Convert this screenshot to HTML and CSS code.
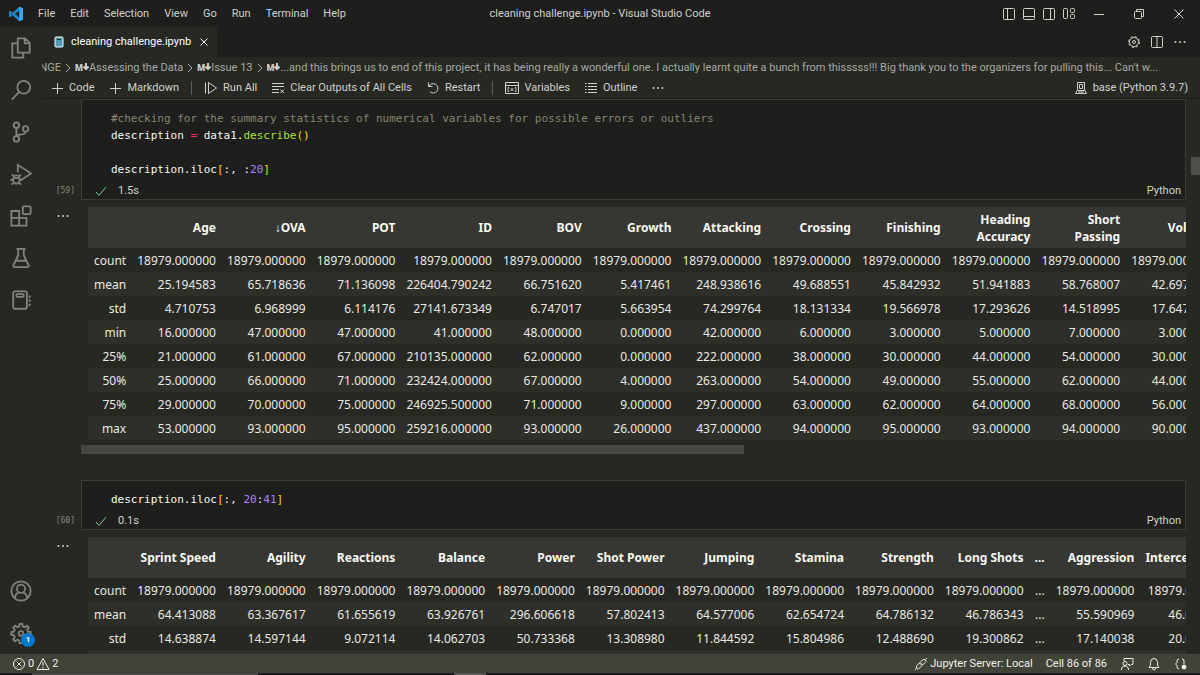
FILE: index.html
```html
<!DOCTYPE html>
<html lang="en">
<head>
  <meta charset="UTF-8">
  <meta name="viewport" content="width=device-width, initial-scale=1.0">
  <title>cleaning challenge.ipynb - Visual Studio Code</title>
  <link rel="stylesheet" href="styles.css">
</head>
<body>
  <header class="titlebar">
    <div class="titlebar-left">
      <svg class="logo" viewBox="0 0 16 16"><path d="M11.2.8 15 2.5v11l-3.8 1.7L4.6 9.2 2 11.2 1 10.6V5.4L2 4.8l2.600 2z" fill="#1f8ad2"/><path d="M11.2.8 15 2.5v11l-3.8 1.700z" fill="#3ba9f4"/><path d="M11.2 4.7v6.600L6.800 8z" fill="#1e1f1c"/><path d="M3 6.900v2.200L4.100 8z" fill="#1e1f1c"/></svg>
      <nav class="menu">
        <button>File</button>
        <button>Edit</button>
        <button>Selection</button>
        <button>View</button>
        <button>Go</button>
        <button>Run</button>
        <button>Terminal</button>
        <button>Help</button>
      </nav>
    </div>
    <div class="window-title">cleaning challenge.ipynb - Visual Studio Code</div>
    <div class="titlebar-right">
      <div class="layout-controls">
        <button aria-label="Toggle side bar"><svg class="icon" viewBox="0 0 14 14"><rect x="1.500" y="1.500" width="11" height="11" rx="1"/><path d="M5.500 1.500v11"/></svg></button>
        <button aria-label="Toggle panel"><svg class="icon" viewBox="0 0 14 14"><rect x="1.500" y="1.500" width="11" height="11" rx="1"/><path d="M1.500 9.500h11"/></svg></button>
        <button aria-label="Toggle secondary side bar"><svg class="icon" viewBox="0 0 14 14"><rect x="1.500" y="1.500" width="11" height="11" rx="1"/><path d="M8.500 1.500v11"/></svg></button>
        <button aria-label="Customize layout"><svg class="icon" viewBox="0 0 14 14"><rect x="1.500" y="1.500" width="4" height="10" rx="1"/><rect x="8.500" y="1.500" width="4" height="4" rx="1"/><rect x="8.500" y="7.500" width="4" height="4" rx="1"/></svg></button>
      </div>
      <div class="window-controls">
        <button aria-label="Minimize"><svg class="icon" viewBox="0 0 14 14"><path d="M2 7.500h10"/></svg></button>
        <button aria-label="Restore"><svg class="icon" viewBox="0 0 14 14"><rect x="2.500" y="4.500" width="7" height="7" rx="1"/><path d="M4.500 4.500v-2h7v7h-2"/></svg></button>
        <button aria-label="Close"><svg class="icon" viewBox="0 0 14 14"><path d="m2.500 2.500 9 9m0-9-9 9"/></svg></button>
      </div>
    </div>
  </header>

  <div class="workbench">
    <aside class="activitybar">
      <div class="activity-group">
        <button aria-label="Explorer"><svg class="icon-lg" viewBox="0 0 24 24"><path d="M8.500 1.500h8l5 5v10.500h-13zM16 1.500V7h5.500M8.500 7h-6v15.500h12V17"/></svg></button>
        <button aria-label="Search"><svg class="icon-lg" viewBox="0 0 24 24"><circle cx="15" cy="9" r="7"/><path d="m10 14-8 8.500"/></svg></button>
        <button aria-label="Source control"><svg class="icon-lg" viewBox="0 0 24 24"><circle cx="7" cy="4.500" r="3"/><circle cx="7" cy="19.500" r="3"/><circle cx="17" cy="8.500" r="3"/><path d="M7 7.500v9M17 11.500c0 3-4 3.500-7 3.500-2 0-3 1-3 1.500"/></svg></button>
        <button aria-label="Run and debug"><svg class="icon-lg" viewBox="0 0 24 24"><path d="M8.500 10V2L23 11.500 13 18"/><ellipse cx="7" cy="18" rx="3.500" ry="4.500"/><path d="M3.700 16.500h6.600M4.500 14.500 2 12.500M9.500 14.500l2.500-2M3.500 18.500H.5M10.500 18.500h3M4.500 21 2 23.500M9.500 21l2.500 2.500"/></svg></button>
        <button aria-label="Extensions"><svg class="icon-lg" viewBox="0 0 24 24"><path d="M1.500 6.500h8.500v7.500h8v8.500H1.500zM1.500 14H10v8.500"/><rect x="14" y="1.500" width="8.500" height="8.500" rx="1"/></svg></button>
        <button aria-label="Testing"><svg class="icon-lg" viewBox="0 0 24 24"><path d="M7 2h10M9 2v7L3.500 20.500q0 1.500 1.500 1.500h14q1.500 0 1.500-1.500L15 9V2M6.500 15h11"/></svg></button>
        <button aria-label="Notebook"><svg class="icon-lg" viewBox="0 0 24 24"><rect x="3.500" y="2.500" width="15" height="19" rx="2"/><rect x="7" y="5.500" width="8" height="3" rx="1"/><path d="M21.500 7v2.500M21.500 11.500V14M21.500 16v2.500"/></svg></button>
      </div>
      <div class="activity-group">
        <button aria-label="Accounts"><svg class="icon-lg" viewBox="0 0 24 24"><circle cx="12" cy="12" r="10.500"/><circle cx="12" cy="9.500" r="4.500"/><path d="M5.500 20c0-4 2.500-6 4.500-6.500M18.500 20c0-4-2.500-6-4.500-6.500"/></svg></button>
        <button class="manage" aria-label="Manage">
          <svg class="icon-lg" viewBox="0 0 24 24"><path d="M10.500 2h3l.5 3 2 .8 2.500-1.800 2 2-1.700 2.600.8 1.900 3 .5v3l-3 .5-.8 2 1.700 2.500-2 2-2.500-1.700-2 .8-.5 3h-3l-.5-3-2-.8-2.500 1.700-2-2 1.700-2.500-.8-2-3-.5v-3l3-.5.8-1.900L3.500 6l2-2L8 5.800l2-.8z"/><circle cx="12" cy="12.500" r="2.500"/></svg>
          <span class="badge">1</span>
        </button>
      </div>
    </aside>

    <main class="editor">
      <div class="tabs">
        <div class="tab">
          <svg class="file-icon" viewBox="0 0 12 12"><rect x="2" y="1" width="8" height="10" rx="1" fill="#519aba"/><path d="M4 3.500h4" stroke="#272822"/><path d="M10.500 2v2m0 1.500v2m0 1.500v1.500" stroke="#519aba"/></svg>
          <span>cleaning challenge.ipynb</span>
          <button aria-label="Close tab"><svg class="icon tab-close" viewBox="0 0 14 14"><path d="m3.500 3.500 7 7m0-7-7 7"/></svg></button>
        </div>
        <div class="tab-actions">
          <button aria-label="Notebook settings"><svg class="icon" viewBox="0 0 14 14"><circle cx="7" cy="7" r="4.500"/><circle cx="7" cy="7" r="1.500"/><circle cx="7" cy="7" r="5.500" stroke-dasharray="2.200 2.120"/></svg></button>
          <button aria-label="Split editor"><svg class="icon" viewBox="0 0 14 14"><rect x="1.500" y="1.500" width="11" height="11" rx="1"/><path d="M7 1.500v11"/></svg></button>
          <button aria-label="More actions"><svg class="icon dots" viewBox="0 0 14 14"><circle cx="2.500" cy="7" r="1"/><circle cx="7" cy="7" r="1"/><circle cx="11.500" cy="7" r="1"/></svg></button>
        </div>
      </div>

      <nav class="breadcrumbs">
        <a href="#" class="crumb-first">NGE</a>
        <svg class="chevron" viewBox="0 0 8 12"><path d="m2 2 4 4-4 4"/></svg>
        <a href="#"><span class="md">M<svg viewBox="0 0 6 8"><path d="M3 0v6M.5 3.500 3 6l2.500-2.500"/></svg></span>Assessing the Data</a>
        <svg class="chevron" viewBox="0 0 8 12"><path d="m2 2 4 4-4 4"/></svg>
        <a href="#"><span class="md">M<svg viewBox="0 0 6 8"><path d="M3 0v6M.5 3.500 3 6l2.500-2.500"/></svg></span>Issue 13</a>
        <svg class="chevron" viewBox="0 0 8 12"><path d="m2 2 4 4-4 4"/></svg>
        <a href="#" class="crumb-last"><span class="md">M<svg viewBox="0 0 6 8"><path d="M3 0v6M.5 3.500 3 6l2.500-2.500"/></svg></span>...and this brings us to end of this project, it has being really a wonderful one. I actually learnt quite a bunch from thisssss!!! Big thank you to the organizers for pulling this... Can't w...</a>
      </nav>

      <div class="toolbar">
        <button><svg class="icon" viewBox="0 0 14 14"><path d="M7.500 2v11M2 7.500h11"/></svg>Code</button>
        <button><svg class="icon" viewBox="0 0 14 14"><path d="M7.500 2v11M2 7.500h11"/></svg>Markdown</button>
        <span class="separator"></span>
        <button><svg class="icon" viewBox="0 0 14 14"><path d="M1.500 1.500v11M4.500 1.500v11l8-5.500z"/></svg>Run All</button>
        <button><svg class="icon" viewBox="0 0 14 14"><path d="M1 2.500h12M1 5.500h12M1 8.500h7M1 11.500h7M9.500 8.500l3.500 3.500m0-3.500-3.500 3.500"/></svg>Clear Outputs of All Cells</button>
        <button><svg class="icon" viewBox="0 0 14 14"><path d="M2.500 1.500v4h4M3 5.200a4.700 4.700 0 1 1 1 5.600"/></svg>Restart</button>
        <span class="separator"></span>
        <button><svg class="icon" viewBox="0 0 14 14"><path d="M.5 1.500h13v11H.5zM1 4.500h12M4 6.500H3v4h1M10 6.500h1v4h-1M5.500 7l3 3m0-3-3 3"/></svg>Variables</button>
        <button><svg class="icon" viewBox="0 0 14 14"><path d="M4 2.500h9M4 5.500h9M4 8.500h9M4 11.500h9M1 2.500h1.500M1 5.500h1.500M1 8.500h1.500M1 11.500h1.500"/></svg>Outline</button>
        <button aria-label="More"><svg class="icon dots" viewBox="0 0 14 14"><circle cx="2.500" cy="7" r="1"/><circle cx="7" cy="7" r="1"/><circle cx="11.500" cy="7" r="1"/></svg></button>
        <button class="kernel"><svg class="icon" viewBox="0 0 14 14"><path d="M3.500 1.500h7v8h-7zM5.500 3.500h3v4h-3zM3 9.500l-1.500 3h11l-1.500-3M4 11h6"/></svg>base (Python 3.9.7)</button>
      </div>

      <div class="notebook">
        <section class="cell">
          <div class="count">[59]</div>
          <div class="cell-box">
<pre class="code"><span class="comment">#checking for the summary statistics of numerical variables for possible errors or outliers</span>
description <span class="op">=</span> data1.<span class="fn">describe</span><span class="bracket">()</span>

description.iloc<span class="bracket">[</span>:, :<span class="num">20</span><span class="bracket">]</span></pre>
            <div class="cell-status">
              <svg class="check" viewBox="0 0 14 14"><path d="m2 8 3 3.500L12 3"/></svg>
              <span>1.5s</span>
              <button class="language">Python</button>
            </div>
          </div>
        </section>

        <section class="output">
          <button class="output-menu" aria-label="Output actions"><svg class="icon dots" viewBox="0 0 14 14"><circle cx="2.500" cy="7" r="1"/><circle cx="7" cy="7" r="1"/><circle cx="11.500" cy="7" r="1"/></svg></button>
          <div class="output-body">
            <table>
              <thead>
                <tr><th></th><th>Age</th><th>↓OVA</th><th>POT</th><th>ID</th><th>BOV</th><th>Growth</th><th>Attacking</th><th>Crossing</th><th>Finishing</th><th>Heading<br>Accuracy</th><th>Short<br>Passing</th><th>Volleys</th></tr>
              </thead>
              <tbody>
                <tr><th>count</th><td>18979.000000</td><td>18979.000000</td><td>18979.000000</td><td>18979.000000</td><td>18979.000000</td><td>18979.000000</td><td>18979.000000</td><td>18979.000000</td><td>18979.000000</td><td>18979.000000</td><td>18979.000000</td><td>18979.000000</td></tr>
                <tr><th>mean</th><td>25.194583</td><td>65.718636</td><td>71.136098</td><td>226404.790242</td><td>66.751620</td><td>5.417461</td><td>248.938616</td><td>49.688551</td><td>45.842932</td><td>51.941883</td><td>58.768007</td><td>42.697086</td></tr>
                <tr><th>std</th><td>4.710753</td><td>6.968999</td><td>6.114176</td><td>27141.673349</td><td>6.747017</td><td>5.663954</td><td>74.299764</td><td>18.131334</td><td>19.566978</td><td>17.293626</td><td>14.518995</td><td>17.647012</td></tr>
                <tr><th>min</th><td>16.000000</td><td>47.000000</td><td>47.000000</td><td>41.000000</td><td>48.000000</td><td>0.000000</td><td>42.000000</td><td>6.000000</td><td>3.000000</td><td>5.000000</td><td>7.000000</td><td>3.000000</td></tr>
                <tr><th>25%</th><td>21.000000</td><td>61.000000</td><td>67.000000</td><td>210135.000000</td><td>62.000000</td><td>0.000000</td><td>222.000000</td><td>38.000000</td><td>30.000000</td><td>44.000000</td><td>54.000000</td><td>30.000000</td></tr>
                <tr><th>50%</th><td>25.000000</td><td>66.000000</td><td>71.000000</td><td>232424.000000</td><td>67.000000</td><td>4.000000</td><td>263.000000</td><td>54.000000</td><td>49.000000</td><td>55.000000</td><td>62.000000</td><td>44.000000</td></tr>
                <tr><th>75%</th><td>29.000000</td><td>70.000000</td><td>75.000000</td><td>246925.500000</td><td>71.000000</td><td>9.000000</td><td>297.000000</td><td>63.000000</td><td>62.000000</td><td>64.000000</td><td>68.000000</td><td>56.000000</td></tr>
                <tr><th>max</th><td>53.000000</td><td>93.000000</td><td>95.000000</td><td>259216.000000</td><td>93.000000</td><td>26.000000</td><td>437.000000</td><td>94.000000</td><td>95.000000</td><td>93.000000</td><td>94.000000</td><td>90.000000</td></tr>
              </tbody>
            </table>
            <div class="scroll-track"><div class="scroll-thumb"></div></div>
          </div>
        </section>

        <section class="cell">
          <div class="count">[60]</div>
          <div class="cell-box">
<pre class="code">description.iloc<span class="bracket">[</span>:, <span class="num">20</span>:<span class="num">41</span><span class="bracket">]</span></pre>
            <div class="cell-status">
              <svg class="check" viewBox="0 0 14 14"><path d="m2 8 3 3.500L12 3"/></svg>
              <span>0.1s</span>
              <button class="language">Python</button>
            </div>
          </div>
        </section>

        <section class="output">
          <button class="output-menu" aria-label="Output actions"><svg class="icon dots" viewBox="0 0 14 14"><circle cx="2.500" cy="7" r="1"/><circle cx="7" cy="7" r="1"/><circle cx="11.500" cy="7" r="1"/></svg></button>
          <div class="output-body">
            <table>
              <thead>
                <tr><th></th><th>Sprint Speed</th><th>Agility</th><th>Reactions</th><th>Balance</th><th>Power</th><th>Shot Power</th><th>Jumping</th><th>Stamina</th><th>Strength</th><th>Long Shots</th><th>...</th><th>Aggression</th><th>Interceptions</th></tr>
              </thead>
              <tbody>
                <tr><th>count</th><td>18979.000000</td><td>18979.000000</td><td>18979.000000</td><td>18979.000000</td><td>18979.000000</td><td>18979.000000</td><td>18979.000000</td><td>18979.000000</td><td>18979.000000</td><td>18979.000000</td><td>...</td><td>18979.000000</td><td>18979.000000</td></tr>
                <tr><th>mean</th><td>64.413088</td><td>63.367617</td><td>61.655619</td><td>63.926761</td><td>296.606618</td><td>57.802413</td><td>64.577006</td><td>62.654724</td><td>64.786132</td><td>46.786343</td><td>...</td><td>55.590969</td><td>46.000000</td></tr>
                <tr><th>std</th><td>14.638874</td><td>14.597144</td><td>9.072114</td><td>14.062703</td><td>50.733368</td><td>13.308980</td><td>11.844592</td><td>15.804986</td><td>12.488690</td><td>19.300862</td><td>...</td><td>17.140038</td><td>20.000000</td></tr>
                <tr><th></th><td></td><td></td><td></td><td></td><td></td><td></td><td></td><td></td><td></td><td></td><td></td><td></td><td></td></tr>
              </tbody>
            </table>
          </div>
        </section>
        <div class="page-thumb"></div>
      </div>
    </main>
  </div>

  <footer class="statusbar">
    <button class="problems">
      <svg class="icon" viewBox="0 0 14 14"><circle cx="7" cy="7" r="5.500"/><path d="m4.500 4.500 5 5m0-5-5 5"/></svg>0
      <svg class="icon" viewBox="0 0 14 14"><path d="M7 1.500 13 12.500H1zM7 5v4M7 10v1.500"/></svg>2
    </button>
    <div class="status-right">
      <button><svg class="icon" viewBox="0 0 14 14"><path d="M6 5.500 8.500 3Q10 1.500 11.500 3T11 5.500L8.500 8zM5.500 6 3 8.500Q1.500 10 3 11.500T5.500 11L8 8.500zM11.500 2.500l1.500-1.500M1 13l1.500-1.500"/></svg>Jupyter Server: Local</button>
      <button>Cell 86 of 86</button>
      <button aria-label="Feedback"><svg class="icon" viewBox="0 0 14 14"><path d="M4 4V1.500h9v6h-2L9.500 9V7.500H8"/><circle cx="5" cy="6.500" r="2"/><path d="M1.500 13c0-3 1.500-4 3.500-4s3.500 1 3.500 4"/></svg></button>
      <button aria-label="Notifications"><svg class="icon" viewBox="0 0 14 14"><path d="M2 10.500 3.500 8V5.500q0-4 3.500-4t3.500 4V8l1.500 2.500zM5.500 11q0 2 1.500 2t1.500-2"/></svg></button>
      <button aria-label="Formatting"><svg class="icon" viewBox="0 0 14 14"><path d="M5 2Q3 2 3 4v1.500L1.500 7 3 8.500V10q0 2 2 2M8 2q2 0 2 2v3"/><circle cx="10" cy="10" r="2" fill="currentColor"/></svg></button>
    </div>
  </footer>
  <div class="taskbar"><span class="task-wide"></span><span class="task-small"></span></div>
</body>
</html>
```

FILE: styles.css
```css
* {
  box-sizing: border-box;
}

body {
  margin: 0;
  height: 100vh;
  display: flex;
  flex-direction: column;
  overflow: hidden;
  background: #272822;
  color: #d0d0ca;
  font-family: Roboto, "Noto Sans", sans-serif;
  font-size: 11px;
  line-height: 16px;
}

button {
  display: flex;
  align-items: center;
  padding: 0;
  border: 0;
  background: none;
  color: inherit;
  font: inherit;
  white-space: nowrap;
  cursor: pointer;
}

a {
  color: inherit;
  text-decoration: none;
}

svg {
  flex: none;
  fill: none;
  stroke: currentColor;
}

.icon {
  width: 14px;
  height: 14px;
}

.dots {
  fill: currentColor;
  stroke: none;
}

/* title bar */
.titlebar {
  flex: none;
  height: 27px;
  display: grid;
  grid-template-columns: 1fr auto 1fr;
  align-items: center;
  background: #1e1f1c;
}

.titlebar-left,
.menu {
  display: flex;
  align-items: center;
}

.titlebar-left {
  padding-left: 8px;
  gap: 14px;
}

.logo {
  width: 16px;
  height: 16px;
  stroke: none;
}

.menu {
  gap: 15px;
}

.titlebar-right {
  display: flex;
  justify-content: flex-end;
  align-items: center;
  gap: 16px;
  padding-right: 14px;
}

.layout-controls {
  display: flex;
  gap: 6px;
}

.window-controls {
  display: flex;
  gap: 26px;
}

/* activity bar */
.workbench {
  flex: 1;
  min-height: 0;
  display: flex;
}

.activitybar {
  flex: none;
  width: 42px;
  display: flex;
  flex-direction: column;
  justify-content: space-between;
  color: #80817a;
}

.activity-group button {
  width: 42px;
  height: 42px;
  justify-content: center;
}

.icon-lg {
  width: 22px;
  height: 22px;
  stroke-width: 2;
}

.manage {
  position: relative;
}

.badge {
  position: absolute;
  right: 7px;
  bottom: 7px;
  width: 14px;
  height: 14px;
  border-radius: 50%;
  background: #007acc;
  color: #fff;
  font-size: 8px;
  font-weight: bold;
  line-height: 14px;
  text-align: center;
}

/* editor */
.editor {
  flex: 1;
  min-width: 0;
  display: flex;
  flex-direction: column;
}

.tabs {
  flex: none;
  height: 30px;
  display: flex;
  justify-content: space-between;
  background: #1e1f1c;
}

.tab {
  display: flex;
  align-items: center;
  gap: 6px;
  padding: 0 6px 0 11px;
  background: #272822;
  color: #fff;
}

.file-icon {
  width: 12px;
  height: 12px;
}

.tab-actions {
  display: flex;
  align-items: center;
  gap: 9px;
  padding-right: 13px;
}

.breadcrumbs {
  flex: none;
  height: 21px;
  display: flex;
  align-items: center;
  gap: 3px;
  padding-right: 8px;
  color: #a8a9a2;
  white-space: nowrap;
}

.crumb-first {
  flex: none;
  width: 19px;
  display: flex;
  justify-content: flex-end;
  overflow: hidden;
}

.crumb-last {
  min-width: 0;
  overflow: hidden;
  text-overflow: ellipsis;
}

.chevron {
  width: 8px;
  height: 12px;
}

.md {
  color: #ccccc7;
  font-size: 9px;
  font-weight: 900;
}

.md svg {
  width: 6px;
  height: 8px;
  stroke-width: 2;
}

.toolbar {
  flex: none;
  height: 21px;
  display: flex;
  align-items: center;
  gap: 14px;
  padding: 0 12px 0 8px;
  border-bottom: 1px solid #1c1d19;
}

.toolbar button {
  gap: 5px;
}

.separator {
  width: 1px;
  height: 14px;
  margin: 0 -2px;
  background: #5c5d57;
}

.toolbar .kernel {
  margin-left: auto;
}

/* notebook */
.notebook {
  position: relative;
  flex: 1;
  min-height: 0;
  overflow: hidden;
  padding-right: 14px;
}

.cell,
.output {
  display: flex;
}

.count {
  flex: none;
  width: 39px;
  padding: 0 6px 1px 0;
  align-self: flex-end;
  color: #85867f;
  font-family: "DejaVu Sans Mono", monospace;
  font-size: 8px;
  text-align: right;
}

.cell-box {
  flex: 1;
  min-width: 0;
  border: 1px solid #3a3b35;
  background: #1e1f1c;
}

.code {
  margin: 0;
  padding: 10px 0 0 29px;
  color: #f8f8f2;
  font-family: "DejaVu Sans Mono", monospace;
  font-size: 11px;
  line-height: 17px;
}

.comment {
  color: #88846f;
}

.op {
  color: #f92672;
}

.fn {
  color: #a6e22e;
}

.bracket {
  color: #ffd700;
}

.num {
  color: #ae81ff;
}

.cell-status {
  display: flex;
  align-items: center;
  gap: 10px;
  height: 21px;
  padding: 5px 4px 0 12px;
}

.check {
  width: 14px;
  height: 14px;
  stroke: #73c991;
}

.language {
  margin-left: auto;
}

.output {
  padding-top: 7px;
}

.output-menu {
  flex: none;
  width: 39px;
  height: 18px;
  padding-left: 14px;
}

.output-body {
  flex: 1;
  min-width: 0;
  overflow: hidden;
  padding-bottom: 26px;
}

table {
  margin-left: 7px;
  border-collapse: collapse;
  color: #e8e8e2;
  font-family: "Noto Sans", "Open Sans", sans-serif;
  font-size: 12px;
  line-height: 17px;
  text-align: right;
  white-space: nowrap;
}

th,
td {
  height: 24px;
  padding: 0 7px 0 4px;
}

thead th {
  height: 41px;
  background: #363732;
  color: #f8f8f2;
}

tbody th {
  padding-left: 6px;
  font-weight: normal;
}

tbody tr:nth-child(even) {
  background: #2e2f29;
}

.scroll-track {
  padding-top: 5px;
}

.scroll-thumb {
  width: 60%;
  height: 9px;
  background: #464741;
}

.page-thumb {
  position: absolute;
  top: 58px;
  right: 0;
  width: 9px;
  height: 18px;
  background: #4f504a;
}

/* status bar */
.statusbar {
  flex: none;
  height: 19px;
  display: flex;
  align-items: center;
  justify-content: space-between;
  padding: 0 12px;
  background: #414339;
  color: #f0f0ea;
}

.problems {
  gap: 2px;
}

.status-right {
  display: flex;
  gap: 13px;
}

.status-right button {
  gap: 2px;
}

.taskbar {
  flex: none;
  height: 2px;
  display: flex;
  gap: 196px;
  padding-left: 32px;
  background: #1a1a1a;
}

.task-wide {
  width: 226px;
  background: #4a4a48;
}

.task-small {
  width: 32px;
  background: #5a5a58;
}
```
